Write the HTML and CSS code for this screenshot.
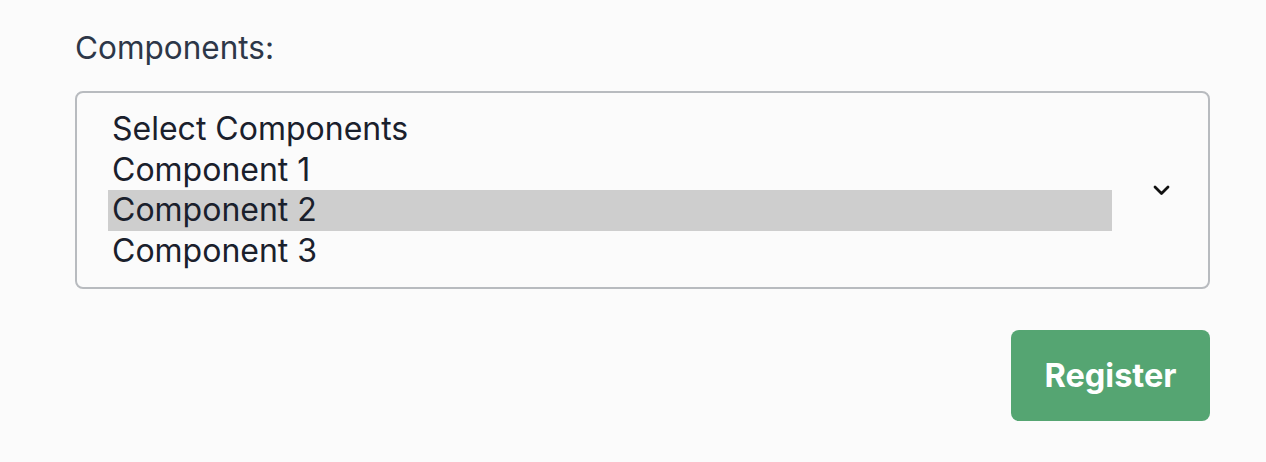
FILE: index.html
```html
<!DOCTYPE html>
<html>
<head>
<meta charset="utf-8">
<link rel="stylesheet" href="styles.css">
</head>
<body>
<form class="form">
  <label class="label">Components:</label>
  <div class="select">
    <ul class="options">
      <li class="option">Select Components</li>
      <li class="option">Component 1</li>
      <li class="option selected">Component 2</li>
      <li class="option">Component 3</li>
    </ul>
    <svg class="chevron" width="17" height="11" viewBox="0 0 17 11"><path d="M2 2 L8.5 8.5 L15 2" fill="none" stroke="#111" stroke-width="2.8" stroke-linecap="round" stroke-linejoin="round"/></svg>
  </div>
  <div class="actions">
    <button type="button" class="btn">Register</button>
  </div>
</form>
</body>
</html>
```
FILE: styles.css
```css
html, body { margin: 0; padding: 0; }
body { background: #fbfbfb; font-family: Inter, "Noto Sans", sans-serif; }
.form { padding: 28px 56px 0 75px; display: flex; flex-direction: column; }
.label { font-size: 31.5px; color: #2d3748; line-height: 40px; margin-bottom: 23px; }
.select { border: 2px solid #b8bbbf; border-radius: 8px; height: 198px; box-sizing: border-box; display: flex; align-items: center; padding: 0 38px 0 31px; }
.options { list-style: none; margin: 0; padding: 0; flex: 1; }
.option { font-size: 32px; line-height: 40.5px; color: #1a202c; padding-left: 4px; margin-right: 41px; }
.option.selected { background: #cecece; }
.chevron { display: block; }
.actions { display: flex; justify-content: flex-end; margin-top: 41px; }
.btn { width: 199px; height: 91px; border: 0; border-radius: 8px; background: #55a572; color: #fff; font-family: Inter, sans-serif; font-weight: 700; font-size: 32.5px; }
```
